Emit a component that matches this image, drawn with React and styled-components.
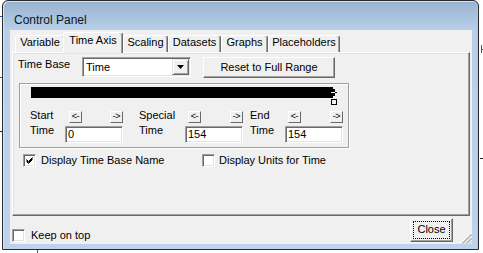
import React from 'react';
import styled, { createGlobalStyle } from 'styled-components';

const Global = createGlobalStyle`
  html, body { margin: 0; padding: 0; background: #fff; }
  body {
    font-family: "Liberation Sans", Arial, sans-serif;
    font-size: 11px;
    color: #000;
  }
  * { box-sizing: border-box; }
`;

const Desktop = styled.div`
  position: relative;
  width: 483px;
  height: 253px;
  overflow: hidden;
  background: #fff;
`;

const Mark = styled.span`
  position: absolute;
  display: block;
  background: ${(p) => p.$c || '#2a4fd0'};
`;

const Window = styled.div`
  margin-left: 2px;
  width: 477px;
  height: 250px;
  border: 1px solid #2b2b2b;
  border-radius: 6px 6px 0 0;
  background: linear-gradient(to bottom, #98b3d1 0px, #b7cfe8 29px, #bcd3eb 100%);
  box-shadow: inset -1px 0 0 #8ad2ee, inset 1px 1px 0 #d5e2f0;
  padding: 0 6px 5px 7px;
  display: flex;
  flex-direction: column;
`;

const TitleBar = styled.div`
  height: 29px;
  padding: 12px 0 0 4px;
  font-size: 12px;
  line-height: 14px;
  color: #0b1626;
`;

const Client = styled.div`
  position: relative;
  height: 214px;
  background: #f0f0f0;
  display: flex;
  flex-direction: column;
`;

const TabArea = styled.div`
  margin: 0 2px;
`;

const TabStrip = styled.div`
  display: flex;
  align-items: flex-end;
  height: 22px;
  padding-left: 3px;
`;

const Tab = styled.div`
  position: relative;
  z-index: ${(p) => (p.$active ? 2 : 0)};
  width: ${(p) => p.$w + (p.$active ? 2 : 0)}px;
  height: ${(p) => (p.$active ? 21 : 17)}px;
  margin-left: ${(p) => (p.$active ? -2 : 0)}px;
  margin-bottom: ${(p) => (p.$active ? -1 : 0)}px;
  padding-top: ${(p) => (p.$active ? 1 : 0)}px;
  background: #f0f0f0;
  border-top: 1px solid #fff;
  border-left: 1px solid #fff;
  border-right: 1px solid #696969;
  box-shadow: inset -1px 0 0 #a0a0a0;
  border-radius: 3px 3px 0 0;
  text-align: center;
  line-height: 13px;
  white-space: nowrap;
`;

const Panel = styled.div`
  position: relative;
  z-index: 1;
  height: 164px;
  background: #f0f0f0;
  border-top: 1px solid #fff;
  border-left: 1px solid #fff;
  border-right: 1px solid #696969;
  border-bottom: 1px solid #696969;
  box-shadow: inset -1px -1px 0 #a0a0a0, inset 1px 1px 0 #e3e3e3;
  display: flex;
  flex-direction: column;
  align-items: flex-start;
`;

const TopRow = styled.div`
  display: flex;
  align-items: flex-start;
  margin-top: 4px;
  padding-left: 5px;
`;

const Label = styled.div`
  width: ${(p) => p.$w}px;
  padding-top: 1px;
  line-height: 13px;
  white-space: nowrap;
`;

const Combo = styled.div`
  position: relative;
  width: 109px;
  height: 20px;
  background: #fff;
  border-top: 1px solid #a0a0a0;
  border-left: 1px solid #a0a0a0;
  border-right: 1px solid #fff;
  border-bottom: 1px solid #fff;
  box-shadow: inset 1px 1px 0 #696969, inset -1px -1px 0 #e3e3e3;
  padding: 1px;
  display: flex;
`;

const ComboText = styled.div`
  flex: 1;
  padding-left: 2px;
  line-height: 16px;
`;

const ArrowBtn = styled.div`
  width: 17px;
  height: 16px;
  background: #f0f0f0;
  border-top: 1px solid #e3e3e3;
  border-left: 1px solid #e3e3e3;
  border-right: 1px solid #696969;
  border-bottom: 1px solid #696969;
  box-shadow: inset 1px 1px 0 #fff, inset -1px -1px 0 #a0a0a0;
  display: flex;
  align-items: center;
  justify-content: center;
`;

const Button = styled.div`
  width: ${(p) => p.$w}px;
  height: ${(p) => p.$h}px;
  margin-left: ${(p) => p.$ml || 0}px;
  margin-top: ${(p) => p.$mt || 0}px;
  background: #f0f0f0;
  border-top: 1px solid #fff;
  border-left: 1px solid #fff;
  border-right: 1px solid #696969;
  border-bottom: 1px solid #696969;
  box-shadow: inset -1px -1px 0 #a0a0a0;
  display: flex;
  align-items: center;
  justify-content: center;
  line-height: 13px;
  white-space: nowrap;
`;

const Focus = styled.div`
  border: 1px dotted #000;
  padding: 1px 3px 2px;
  line-height: 13px;
`;

const GroupBox = styled.div`
  width: 330px;
  height: 65px;
  margin: 5px 0 0 6px;
  border: 1px solid #a0a0a0;
  box-shadow: inset 1px 1px 0 #fff, 1px 1px 0 #fff;
  display: flex;
  flex-direction: column;
`;

const RangeBar = styled.svg`
  display: block;
  margin: 3px 0 0 11px;
`;

const TimeRow = styled.div`
  display: flex;
  margin-top: 3px;
  padding-left: 10px;
`;

const TimeGroup = styled.div`
  display: flex;
  margin-left: ${(p) => p.$ml}px;
`;

const TimeLabel = styled.div`
  width: ${(p) => p.$w}px;
  line-height: 15px;
`;

const TimeControls = styled.div`
  width: 58px;
  display: flex;
  flex-direction: column;
`;

const StepRow = styled.div`
  display: flex;
  justify-content: space-between;
  margin-top: 3px;
  padding-left: ${(p) => p.$pl}px;
`;

const StepBtn = styled.div`
  width: 13px;
  height: 12px;
  background: #f0f0f0;
  border-top: 1px solid #fff;
  border-left: 1px solid #fff;
  border-right: 1px solid #696969;
  border-bottom: 1px solid #696969;
  font-size: 9px;
  line-height: 9px;
  display: flex;
  justify-content: center;
  letter-spacing: -0.5px;
  white-space: nowrap;
`;

const Field = styled.div`
  margin-top: 3px;
  height: 17px;
  background: #fff;
  border-top: 1px solid #a0a0a0;
  border-left: 1px solid #a0a0a0;
  border-right: 1px solid #fff;
  border-bottom: 1px solid #fff;
  box-shadow: inset 1px 1px 0 #696969, inset -1px -1px 0 #e3e3e3;
  padding: 1px 1px 0 2px;
  line-height: 13px;
`;

const CheckRow = styled.div`
  display: flex;
  margin-top: 6px;
  padding-left: 10px;
`;

const CheckItem = styled.div`
  display: flex;
  align-items: center;
  width: ${(p) => (p.$w ? `${p.$w}px` : 'auto')};
  gap: ${(p) => p.$gap || 5}px;
  margin-top: ${(p) => p.$mt || 0}px;
  line-height: 13px;
  white-space: nowrap;
`;

const Box = styled.div`
  width: 13px;
  height: 13px;
  flex: none;
  background: #fff;
  border-top: 1px solid #a0a0a0;
  border-left: 1px solid #a0a0a0;
  border-right: 1px solid #fff;
  border-bottom: 1px solid #fff;
  box-shadow: inset 1px 1px 0 #696969, inset -1px -1px 0 #e3e3e3;
  display: flex;
  align-items: center;
  justify-content: center;
`;

const BottomBar = styled.div`
  display: flex;
  justify-content: space-between;
  align-items: flex-start;
  height: 28px;
  padding: 0 19px 0 2px;
`;

const Grip = styled.svg`
  position: absolute;
  right: 0;
  bottom: 0;
`;

function Check({ checked }) {
  return (
    <Box>
      {checked && (
        <svg width="9" height="9" viewBox="0 0 9 9">
          <path
            d="M1.5 3.5 L3.5 5.5 L7.5 1.5 M1.5 4.5 L3.5 6.5 L7.5 2.5 M1.5 5.5 L3.5 7.5 L7.5 3.5"
            stroke="#000"
            strokeWidth="1"
            fill="none"
          />
        </svg>
      )}
    </Box>
  );
}

function TimeField({ label, lw, ml, pl, value }) {
  return (
    <TimeGroup $ml={ml}>
      <TimeLabel $w={lw}>
        {label}
        <br />
        Time
      </TimeLabel>
      <TimeControls>
        <StepRow $pl={pl}>
          <StepBtn>&lt;-</StepBtn>
          <StepBtn>-&gt;</StepBtn>
        </StepRow>
        <Field>{value}</Field>
      </TimeControls>
    </TimeGroup>
  );
}

const tabs = [
  { t: 'Variable', w: 50 },
  { t: 'Time Axis', w: 58, active: true },
  { t: 'Scaling', w: 45 },
  { t: 'Datasets', w: 53 },
  { t: 'Graphs', w: 47 },
  { t: 'Placeholders', w: 72 },
];

export default function App() {
  return (
    <Desktop>
      <Global />
      <Mark style={{ left: 0, top: 16, width: 2, height: 1 }} />
      <Mark style={{ left: 0, top: 77, width: 2, height: 1 }} />
      <Mark $c="#222" style={{ left: 0, top: 131, width: 2, height: 1 }} />
      <Mark style={{ left: 37, top: 250, width: 1, height: 3 }} />
      <Mark style={{ left: 481, top: 45, width: 1, height: 8 }} />
      <Mark style={{ left: 481, top: 49, width: 2, height: 1 }} />
      <Mark $c="#222" style={{ left: 480, top: 158, width: 3, height: 1 }} />
      <Window>
        <TitleBar>Control Panel</TitleBar>
        <Client>
          <TabArea>
            <TabStrip>
              {tabs.map((tb) => (
                <Tab key={tb.t} $w={tb.w} $active={tb.active}>
                  {tb.t}
                </Tab>
              ))}
            </TabStrip>
            <Panel>
              <TopRow>
                <Label $w={64}>Time Base</Label>
                <Combo>
                  <ComboText>Time</ComboText>
                  <ArrowBtn>
                    <svg width="7" height="4" viewBox="0 0 7 4">
                      <polygon points="0,0 7,0 3.5,4" fill="#000" />
                    </svg>
                  </ArrowBtn>
                </Combo>
                <Button $w={132} $h={21} $ml={12}>Reset to Full Range</Button>
              </TopRow>
              <GroupBox>
                <RangeBar width="310" height="18" viewBox="0 0 310 18">
                  <rect x="0" y="0" width="302" height="11" fill="#000" />
                  <rect x="302" y="2" width="2" height="7" fill="#000" />
                  <rect x="300" y="5" width="4" height="1" fill="#fff" />
                  <rect x="304" y="5" width="2" height="1" fill="#000" />
                  <rect x="300.5" y="12.5" width="5" height="5" fill="none" stroke="#000" strokeWidth="1" />
                </RangeBar>
                <TimeRow>
                  <TimeField label="Start" lw={35} ml={0} pl={4} value="0" />
                  <TimeField label="Special" lw={46} ml={16} pl={3} value="154" />
                  <TimeField label="End" lw={35} ml={7} pl={3} value="154" />
                </TimeRow>
              </GroupBox>
              <CheckRow>
                <CheckItem $w={179} $gap={5}>
                  <Check checked />
                  Display Time Base Name
                </CheckItem>
                <CheckItem $gap={4}>
                  <Check />
                  Display Units for Time
                </CheckItem>
              </CheckRow>
            </Panel>
          </TabArea>
          <BottomBar>
            <CheckItem $mt={13} $gap={6}>
              <Check />
              Keep on top
            </CheckItem>
            <Button $w={43} $h={24} $mt={2}>
              <Focus>Close</Focus>
            </Button>
          </BottomBar>
          <Grip width="12" height="12" viewBox="0 0 12 12">
            <path d="M11 1 L1 11 M11 5 L5 11 M11 9 L9 11" stroke="#fff" strokeWidth="1" />
            <path
              d="M11.5 2 L2 11.5 M11.5 3 L3 11.5 M11.5 6 L6 11.5 M11.5 7 L7 11.5 M11.5 10 L10 11.5"
              stroke="#a0a0a0"
              strokeWidth="1"
            />
          </Grip>
        </Client>
      </Window>
    </Desktop>
  );
}
